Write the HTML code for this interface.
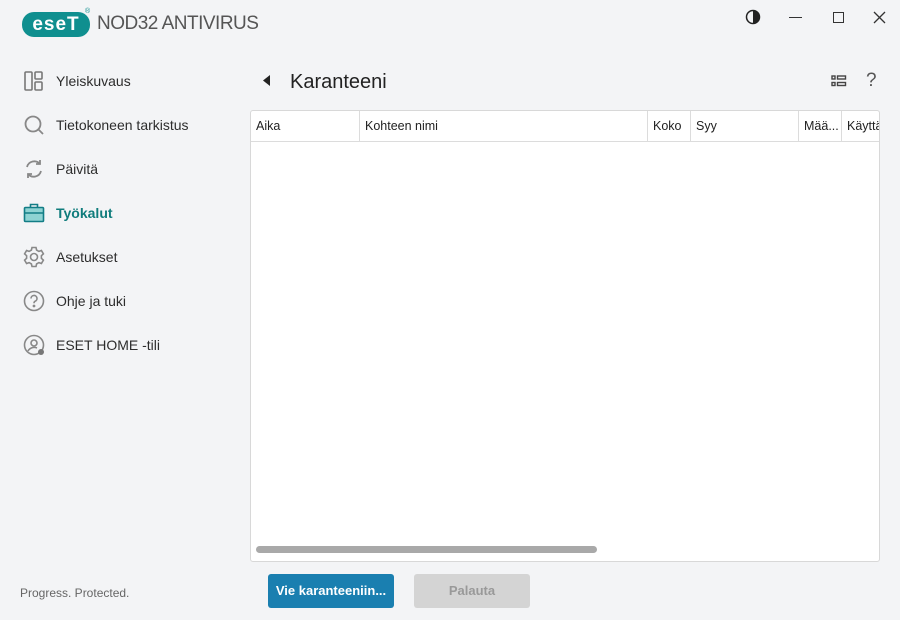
<!DOCTYPE html>
<html><head><meta charset="utf-8"><style>
*{margin:0;padding:0;box-sizing:border-box}
body{width:900px;height:620px;background:#f3f4f6;font-family:"Liberation Sans",sans-serif;position:relative;overflow:hidden;color:#2d2d2d}
.a{position:absolute}
.nav{position:absolute;left:0;width:240px;height:44px;display:flex;align-items:center;font-size:14px;color:#2d2d2d}
.nav svg{position:absolute;left:23px;top:11px}
.nav span{position:absolute;left:56px}
.th{position:absolute;top:0;height:31px;line-height:31px;font-size:12.5px;padding-left:5px;border-right:1px solid #dcdcdc;white-space:nowrap;overflow:hidden;color:#222}
</style></head><body>
<div class="a" style="left:22px;top:12px;width:68px;height:25px;background:#0f8f8f;border-radius:12px;color:#fff;font-weight:bold;font-size:19px;line-height:25px;text-align:center;letter-spacing:1px">eseT</div>
<div class="a" style="left:85px;top:8px;font-size:7px;color:#0f8f8f">®</div>
<div class="a" style="left:97px;top:13px;font-size:19px;color:#555;letter-spacing:-0.5px">NOD32 ANTIVIRUS</div>
<svg class="a" style="left:745px;top:9px" width="16" height="16" viewBox="0 0 16 16"><circle cx="8" cy="8" r="6.5" fill="none" stroke="#222" stroke-width="1.5"/><path d="M8 1.5a6.5 6.5 0 0 1 0 13z" fill="#222"/></svg>
<div class="a" style="left:789px;top:17px;width:13px;height:1.3px;background:#333"></div>
<div class="a" style="left:833px;top:12px;width:11px;height:11px;border:1.3px solid #333"></div>
<svg class="a" style="left:873px;top:11px" width="13" height="13" viewBox="0 0 13 13"><path d="M1 1L12 12M12 1L1 12" stroke="#333" stroke-width="1.3"/></svg>

<div class="nav" style="top:59px"><svg width="22" height="22" viewBox="0 0 22 22" fill="none" stroke="#777" stroke-width="1.6"><rect x="2" y="2" width="7" height="18" rx="1"/><rect x="12" y="2" width="7" height="7" rx="1"/><rect x="12" y="12" width="7" height="8" rx="1"/></svg><span>Yleiskuvaus</span></div>
<div class="nav" style="top:103px"><svg width="22" height="22" viewBox="0 0 22 22" fill="none" stroke="#888" stroke-width="1.8"><circle cx="10" cy="10" r="7.5"/><path d="M15.5 15.5L20 20"/></svg><span>Tietokoneen tarkistus</span></div>
<div class="nav" style="top:147px"><svg width="22" height="22" viewBox="0 0 22 22" fill="none" stroke="#888" stroke-width="1.8"><path d="M4 9a7.5 7.5 0 0 1 13-3M18 13a7.5 7.5 0 0 1-13 3"/><path d="M17 2v4h-4M5 20v-4h4"/></svg><span>Päivitä</span></div>
<div class="nav" style="top:191px;color:#0f7c7c;font-weight:bold"><svg width="22" height="22" viewBox="0 0 22 22"><rect x="1.5" y="5.5" width="19" height="14" rx="1" fill="#8ed3d3" stroke="#127d86" stroke-width="1.6"/><path d="M7.5 5.5V2.5h7v3M1.5 11h19" fill="none" stroke="#127d86" stroke-width="1.6"/></svg><span>Työkalut</span></div>
<div class="nav" style="top:235px"><svg width="22" height="22" viewBox="0 0 22 22" fill="none" stroke="#888" stroke-width="1.6"><circle cx="11" cy="11" r="3.5"/><path d="M9 1.5h4l.6 2.6 2.3 1.3 2.5-.9 2 3.4-2 1.8v2.6l2 1.8-2 3.4-2.5-.9-2.3 1.3-.6 2.6H9l-.6-2.6-2.3-1.3-2.5.9-2-3.4 2-1.8V9.7l-2-1.8 2-3.4 2.5.9 2.3-1.3z"/></svg><span>Asetukset</span></div>
<div class="nav" style="top:279px"><svg width="22" height="22" viewBox="0 0 22 22" fill="none" stroke="#888" stroke-width="1.6"><circle cx="11" cy="11" r="9.5"/><path d="M8 8.5a3 3 0 1 1 4 2.8c-.8.4-1 1-1 2"/><circle cx="11" cy="16" r=".6" fill="#888"/></svg><span>Ohje ja tuki</span></div>
<div class="nav" style="top:323px"><svg width="22" height="22" viewBox="0 0 22 22" fill="none" stroke="#888" stroke-width="1.6"><circle cx="11" cy="11" r="9.5"/><circle cx="11" cy="9" r="3"/><path d="M5 17a7 7 0 0 1 9-3"/><circle cx="18" cy="18" r="3" fill="#777" stroke="none"/></svg><span>ESET HOME -tili</span></div>
<div class="a" style="left:20px;top:586px;font-size:12px;color:#666">Progress. Protected.</div>

<svg class="a" style="left:263px;top:75px" width="8" height="11"><path d="M7 0L0 5.5 7 11z" fill="#222"/></svg>
<div class="a" style="left:290px;top:71px;font-size:20px;color:#222">Karanteeni</div>
<svg class="a" style="left:831px;top:75px" width="16" height="12" viewBox="0 0 16 12" fill="none" stroke="#444" stroke-width="1.4"><rect x="1" y="1" width="3" height="3"/><rect x="1" y="7.5" width="3" height="3"/><rect x="6.5" y="1" width="8" height="3"/><rect x="6.5" y="7.5" width="8" height="3"/></svg>
<div class="a" style="left:866px;top:70px;font-size:19px;color:#555">?</div>

<div class="a" style="left:250px;top:110px;width:630px;height:452px;background:#fff;border:1px solid #d8d8d8;border-radius:3px;overflow:hidden">
 <div class="a" style="left:0;top:0;width:630px;height:31px;border-bottom:1px solid #dcdcdc">
  <div class="th" style="left:0;width:109px">Aika</div>
  <div class="th" style="left:109px;width:288px">Kohteen nimi</div>
  <div class="th" style="left:397px;width:43px">Koko</div>
  <div class="th" style="left:440px;width:108px">Syy</div>
  <div class="th" style="left:548px;width:43px">Mää...</div>
  <div class="th" style="left:591px;width:40px;border-right:none">Käyttäjä</div>
 </div>
 <div class="a" style="left:5px;top:435px;width:341px;height:7px;background:#a9a9a9;border-radius:4px"></div>
</div>

<div class="a" style="left:268px;top:574px;width:126px;height:34px;background:#1a7fb0;border-radius:3px;color:#fff;font-weight:bold;font-size:13px;line-height:34px;text-align:center">Vie karanteeniin...</div>
<div class="a" style="left:414px;top:574px;width:116px;height:34px;background:#d4d4d4;border-radius:3px;color:#999;font-weight:bold;font-size:13px;line-height:34px;text-align:center">Palauta</div>
</body></html>
